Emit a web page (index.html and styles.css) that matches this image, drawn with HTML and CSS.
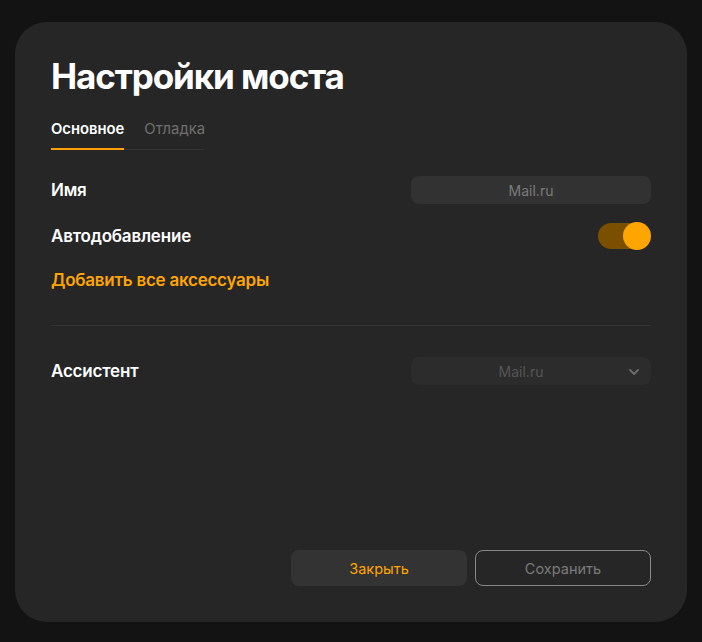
FILE: index.html
```html
<!DOCTYPE html>
<html lang="ru">
<head>
<meta charset="utf-8">
<link rel="stylesheet" href="styles.css">
</head>
<body>
<div class="page">
  <div class="card">
    <h1 class="title">Настройки моста</h1>
    <div class="tabs">
      <div class="tab active">Основное</div>
      <div class="tab">Отладка</div>
    </div>
    <div class="rows">
      <div class="row">
        <div class="label">Имя</div>
        <div class="input">Mail.ru</div>
      </div>
      <div class="row">
        <div class="label">Автодобавление</div>
        <div class="toggle"><div class="knob"></div></div>
      </div>
      <div class="link">Добавить все аксессуары</div>
    </div>
    <div class="divider"></div>
    <div class="row assistant">
      <div class="label">Ассистент</div>
      <div class="select">
        <span>Mail.ru</span>
        <svg class="chev" width="12" height="8" viewBox="0 0 12 8"><path d="M2 2l4 4 4-4" fill="none" stroke="#6a6a6a" stroke-width="2" stroke-linecap="round" stroke-linejoin="round"/></svg>
      </div>
    </div>
    <div class="spacer"></div>
    <div class="actions">
      <button class="btn close">Закрыть</button>
      <button class="btn save">Сохранить</button>
    </div>
  </div>
</div>
</body>
</html>
```
FILE: styles.css
```css
html, body {
  margin: 0;
  padding: 0;
  background: #131313;
  font-family: Inter, "Noto Sans", sans-serif;
}
.page {
  width: 702px;
  height: 642px;
  padding: 22px 15px 20px 15px;
  box-sizing: border-box;
}
.card {
  width: 672px;
  height: 600px;
  background: #262626;
  border-radius: 32px;
  padding: 32px 36px 36px 36px;
  box-sizing: border-box;
  display: flex;
  flex-direction: column;
}
.title {
  margin: 0;
  color: #fff;
  font-size: 35px;
  font-weight: 700;
  line-height: 44px;
  letter-spacing: -1.1px;
}
.tabs {
  display: flex;
  width: 153px;
  margin-top: 23px;
  border-bottom: 1px solid #333;
}
.tab {
  font-size: 14.8px;
  font-weight: 400;
  color: #6f6f6f;
  padding-bottom: 11px;
  line-height: 17px;
  margin-right: 20px;
}
.tab.active {
  color: #fff;
  font-weight: 600;
  box-shadow: inset 0 -2px 0 #ffa000;
  margin-bottom: -1px;
  padding-bottom: 12px;
}
.rows {
  margin-top: 26px;
  display: flex;
  flex-direction: column;
}
.row {
  display: flex;
  align-items: center;
  justify-content: space-between;
  height: 28px;
}
.row + .row {
  margin-top: 18px;
}
.label {
  color: #fff;
  font-size: 17px;
  font-weight: 600;
  letter-spacing: -0.2px;
}
.input, .select {
  width: 240px;
  height: 28px;
  border-radius: 8px;
  background: #323232;
  color: #7a7a7a;
  font-size: 14px;
  display: flex;
  align-items: center;
  justify-content: center;
  position: relative;
  box-sizing: border-box;
}
.select {
  background: #2c2c2c;
  color: #555;
  padding-right: 20px;
}
.chev {
  position: absolute;
  right: 11px;
  top: 11px;
}
.toggle {
  width: 52px;
  height: 26px;
  border-radius: 13px;
  background: #7a5000;
  position: relative;
  margin-right: 1px;
}
.knob {
  position: absolute;
  right: -1px;
  top: -1px;
  width: 28px;
  height: 28px;
  border-radius: 50%;
  background: #ffa500;
}
.link {
  margin-top: 18px;
  color: #ffa500;
  font-size: 17px;
  font-weight: 600;
  letter-spacing: -0.25px;
  line-height: 24px;
}
.divider {
  margin-top: 33px;
  height: 1px;
  background: #333;
}
.assistant {
  margin-top: 31px;
}
.spacer {
  flex: 1;
}
.actions {
  display: flex;
  justify-content: flex-end;
  gap: 8px;
}
.btn {
  width: 176px;
  height: 36px;
  border-radius: 8px;
  font-family: Inter, "Noto Sans", sans-serif;
  font-size: 14.5px;
  box-sizing: border-box;
}
.btn.close {
  background: #333;
  border: none;
  color: #ffa500;
}
.btn.save {
  background: transparent;
  border: 1px solid #8a8a8a;
  color: #7a7a7a;
}
```
